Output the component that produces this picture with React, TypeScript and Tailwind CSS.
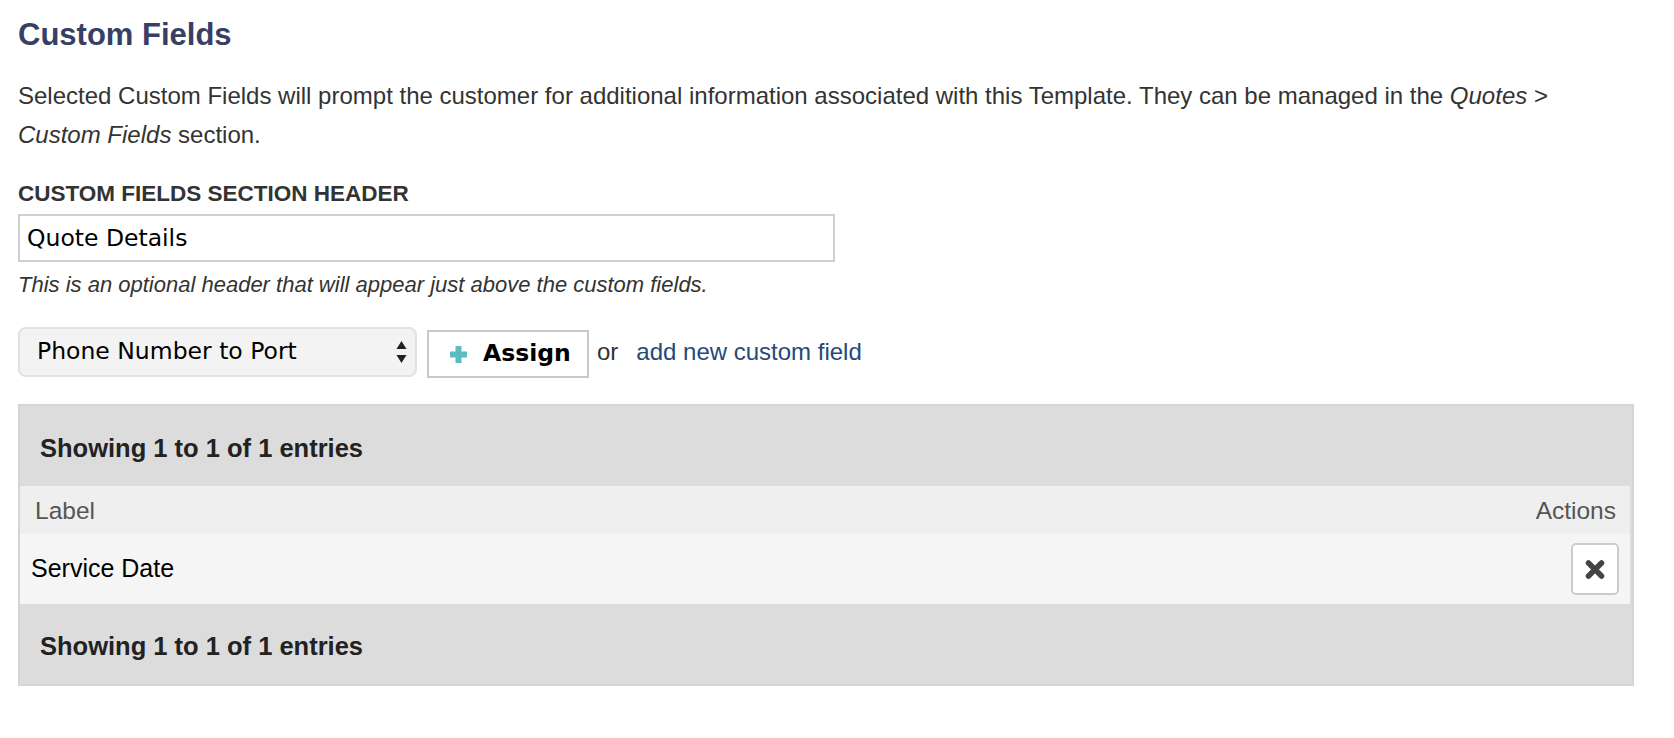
export default function App() {
  return (
    <div className="min-h-screen bg-white pl-[18px] pr-[40px] pt-[18px] font-['Liberation_Sans',Arial,sans-serif] text-[#333]">
      <h2 className="text-[31px] font-bold leading-[34px] text-[#373f65]">Custom Fields</h2>

      <p className="mt-[24px] max-w-[1590px] text-[24px] leading-[39px]">
        Selected Custom Fields will prompt the customer for additional information associated with this Template. They can be
        managed in the <em>Quotes</em> &gt; <em>Custom Fields</em> section.
      </p>

      <label className="mt-[27px] block text-[22.5px] font-bold leading-[26px]">CUSTOM FIELDS SECTION HEADER</label>
      <input
        defaultValue="Quote Details"
        className="mt-[7px] block h-[48px] w-[817px] border-2 border-[#cfcfcf] px-[7px] font-['DejaVu_Sans',sans-serif] text-[23.5px] text-black outline-none"
      />
      <p className="mt-[9px] text-[22px] italic leading-[28px]">
        This is an optional header that will appear just above the custom fields.
      </p>

      <div className="mt-[28px] flex items-start">
        <div className="flex h-[50px] w-[399px] items-center justify-between rounded-[8px] border-2 border-[#e2e2e2] bg-[#f3f3f3] pl-[17px] pr-[8px] font-['DejaVu_Sans',sans-serif] text-[23.5px] text-black">
          <span>Phone Number to Port</span>
          <svg width="11" height="22" viewBox="0 0 11 22" className="text-[#222]">
            <path d="M5.5 0 L10.5 8 L0.5 8 Z" fill="currentColor" />
            <path d="M5.5 22 L10.5 14 L0.5 14 Z" fill="currentColor" />
          </svg>
        </div>
        <button className="ml-[10px] mt-[3px] flex h-[48px] w-[162px] items-center border-2 border-[#c8c8c8] bg-white pl-[20px] font-['DejaVu_Sans',sans-serif] text-[23.5px] font-bold text-black">
          <svg width="19" height="19" viewBox="0 0 19 19">
            <path d="M9.5 1 V18 M1 9.5 H18" stroke="#5bbcc2" strokeWidth="6" />
          </svg>
          <span className="ml-[15px]">Assign</span>
        </button>
        <span className="ml-[8px] text-[24px] leading-[50px]">or</span>
        <a href="#" className="ml-[18px] text-[24px] leading-[50px] text-[#24497a]">
          add new custom field
        </a>
      </div>

      <div className="mt-[26px] border-2 border-[#d5d5d5] bg-[#dcdcdc]">
        <div className="h-[80px] pl-[20px] pt-[28px] text-[25.5px] font-bold leading-[28px] text-[#222]">
          Showing 1 to 1 of 1 entries
        </div>
        <div className="mr-[2px]">
          <div className="flex h-[48px] items-center justify-between bg-[#efefef] pl-[15px] pr-[14px] pt-[3px] text-[24.5px] text-[#555]">
            <span>Label</span>
            <span>Actions</span>
          </div>
          <div className="flex h-[70px] items-center justify-between bg-[#f5f5f5] pl-[11px] pr-[11px] text-[25px] text-black">
            <span>Service Date</span>
            <button className="flex h-[52px] w-[48px] items-center justify-center rounded-[5px] border-2 border-[#cccccc] bg-white">
              <svg width="20" height="19" viewBox="0 0 20 19">
                <path d="M3.5 3 L16.5 16 M16.5 3 L3.5 16" stroke="#444" strokeWidth="5.5" strokeLinecap="round" />
              </svg>
            </button>
          </div>
        </div>
        <div className="h-[80px] pl-[20px] pt-[28px] text-[25.5px] font-bold leading-[28px] text-[#222]">
          Showing 1 to 1 of 1 entries
        </div>
      </div>
    </div>
  );
}
